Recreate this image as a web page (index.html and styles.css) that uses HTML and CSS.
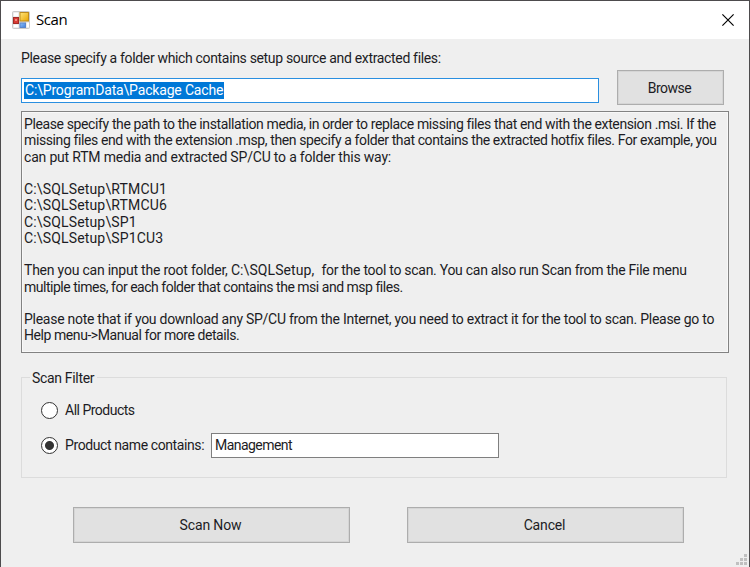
FILE: index.html
```html
<!DOCTYPE html>
<html lang="en">
<head>
<meta charset="utf-8">
<title>Scan</title>
<link rel="stylesheet" href="styles.css">
</head>
<body>
<div class="window">
  <header class="titlebar">
    <svg class="app-icon" width="18" height="18" viewBox="0 0 18 18">
      <defs>
        <linearGradient id="gold" x1="0" y1="0" x2="1" y2="1"><stop offset="0" stop-color="#ffe57c"/><stop offset="1" stop-color="#e9a500"/></linearGradient>
        <linearGradient id="blue" x1="0" y1="0" x2="1" y2="1"><stop offset="0" stop-color="#8fc0fa"/><stop offset="1" stop-color="#3f7fdc"/></linearGradient>
      </defs>
      <rect x=".5" y=".5" width="17" height="17" rx="1" fill="#dcdcdc" stroke="#cbcbcb"/>
      <path d="M1.500 1.500h5v4h-5zM1.500 13.500h5v3h-5z" fill="#fff"/>
      <rect x="1.500" y="6.500" width="5" height="6" fill="#d83b34" stroke="#a32a25"/>
      <rect x="3" y="8" width="2" height="2" fill="#f08a80"/>
      <rect x="8" y="1.500" width="8.500" height="8.500" fill="url(#gold)" stroke="#bd8b1c"/>
      <rect x="8" y="12" width="5.500" height="4.500" fill="url(#blue)" stroke="#5a86cc"/>
      <path d="M14.500 11.500h2.500v5h-2.500z" fill="#fff"/>
    </svg>
    <h1 class="title">Scan</h1>
    <svg class="close" width="12" height="12" viewBox="0 0 12 12"><path d="M.4.4 11.600 11.600M11.600.4.4 11.600" stroke="#000" stroke-width="1.150"/></svg>
  </header>
  <main class="content">
    <div class="source-row">
      <div class="source">
        <div class="label"><span class="t-label">Please specify a folder which contains setup source and extracted files:</span></div>
        <div class="field focused"><span class="selection">C:\ProgramData\Package Cache</span></div>
      </div>
      <div class="button browse"><span>Browse</span></div>
    </div>
    <div class="info">
      <p class="l1">Please specify the path to the installation media, in order to replace missing files that end with the extension .msi. If the</p>
      <p class="l2">missing files end with the extension .msp, then specify a folder that contains the extracted hotfix files. For example, you</p>
      <p class="l3">can put RTM media and extracted SP/CU to a folder this way:</p>
      <p class="blank"></p>
      <p class="path">C:\SQLSetup\RTMCU1</p>
      <p class="path">C:\SQLSetup\RTMCU6</p>
      <p class="path">C:\SQLSetup\SP1</p>
      <p class="path">C:\SQLSetup\SP1CU3</p>
      <p class="blank"></p>
      <p><span class="l4-start">Then you can input the root folder, </span><span class="l4-path">C:\SQLSetup,&nbsp; </span><span class="l4-end">for the tool to scan. You can also run Scan from the File menu</span></p>
      <p class="l5">multiple times, for each folder that contains the msi and msp files.</p>
      <p class="blank"></p>
      <p class="l6">Please note that if you download any SP/CU from the Internet, you need to extract it for the tool to scan. Please go to</p>
      <p class="l7">Help menu-&gt;Manual for more details.</p>
    </div>
    <section class="group">
      <div class="legend"><span>Scan Filter</span></div>
      <div class="option"><i class="radio"></i><span class="t-all">All Products</span></div>
      <div class="option second"><i class="radio checked"></i><span class="t-name">Product name contains:</span><div class="field filter"><span>Management</span></div></div>
    </section>
    <div class="actions">
      <div class="button wide"><span class="t-scan">Scan Now</span></div>
      <div class="button wide"><span class="t-cancel">Cancel</span></div>
    </div>
  </main>
  <svg class="grip" width="11" height="11" viewBox="0 0 11 11"><path d="M8 0h3v3H8zM4 4h3v3H4zM8 4h3v3H8zM0 8h3v3H0zM4 8h3v3H4zM8 8h3v3H8z" fill="#c0c0c0"/></svg>
</div>
</body>
</html>
```
FILE: styles.css
```css
* { box-sizing: border-box; }
body { margin: 0; }
p, h1 { margin: 0; }
.window {
  position: relative;
  width: 750px;
  height: 567px;
  overflow: hidden;
  background: #efefef;
  border: 1px solid #4d4b4d;
  border-bottom: 0;
  color: #1c1c24;
  font: 14px/16.25px Roboto, "Liberation Sans", sans-serif;
  white-space: nowrap;
}
.titlebar {
  display: flex;
  align-items: center;
  height: 38px;
  padding: 0 15px 0 11px;
  background: #fff;
}
.title {
  flex: 1;
  margin: -2px 0 0 6px;
  color: #000;
  font: 15px/20px "Open Sans", "Noto Sans", sans-serif;
  letter-spacing: -.4px;
}
.close { display: block; }
.content { padding: 0 20px; }
.source-row { display: flex; gap: 18px; height: 72px; }
.source { width: 578px; padding-top: 10px; }
.label { height: 29px; line-height: 18px; }
.t-label { letter-spacing: -.335px; }
.field {
  display: flex;
  align-items: center;
  height: 25px;
  padding-left: 2px;
  background: #fff;
  border: 1px solid #7f7f7f;
}
.focused { border-color: #2a8fe0; }
.selection {
  height: 17px;
  padding: 0 1px;
  line-height: 17px;
  background: #0078d7;
  color: #fff;
  letter-spacing: -.17px;
}
.button {
  display: flex;
  align-items: center;
  justify-content: center;
  background: #e1e1e1;
  border: 1px solid #adadad;
  box-shadow: inset 0 0 0 1px #d5d5d5;
}
.browse {
  width: 107px;
  height: 35px;
  margin-top: 31px;
  padding: 1px 2px 0 0;
  letter-spacing: -.5px;
}
.info {
  width: 708px;
  height: 242px;
  padding: 4px 0 0 2px;
  border: 1px solid #828282;
  box-shadow: inset 0 0 0 1px #f8f8f8;
}
.info p { height: 16.25px; }
.l1 { letter-spacing: -.38px; }
.l2 { letter-spacing: -.39px; }
.l3 { letter-spacing: -.19px; }
.path { letter-spacing: .16px; }
.l4-start { letter-spacing: -.22px; }
.l4-path { letter-spacing: .08px; }
.l4-end { letter-spacing: -.28px; }
.l5 { letter-spacing: -.48px; }
.l6 { letter-spacing: -.27px; }
.l7 { letter-spacing: -.43px; }
.group {
  width: 706px;
  height: 101px;
  margin-top: 24px;
  border: 1px solid #dcdcdc;
}
.legend { height: 16px; margin: -8px 0 0 8px; letter-spacing: -.32px; }
.legend span { display: inline-block; padding: 0 3px 0 2px; background: #efefef; }
.option { display: flex; align-items: center; height: 25px; margin: 12px 0 0 19px; }
.second { margin-top: 10px; }
.radio {
  width: 17px;
  height: 17px;
  margin-right: 7px;
  background: #fff;
  border: 1px solid #333;
  border-radius: 50%;
}
.checked { background: radial-gradient(circle, #333 4px, #fff 5px); }
.t-all { letter-spacing: -.5px; }
.t-name { width: 146px; letter-spacing: -.4px; }
.filter { width: 288px; padding-left: 3px; letter-spacing: -.55px; }
.actions { display: flex; gap: 57px; margin: 29px 0 0 52px; }
.wide { width: 277px; height: 36px; padding: 1px 2px 0 0; letter-spacing: -.15px; }
.grip { position: absolute; right: 2px; bottom: 2px; }
```
